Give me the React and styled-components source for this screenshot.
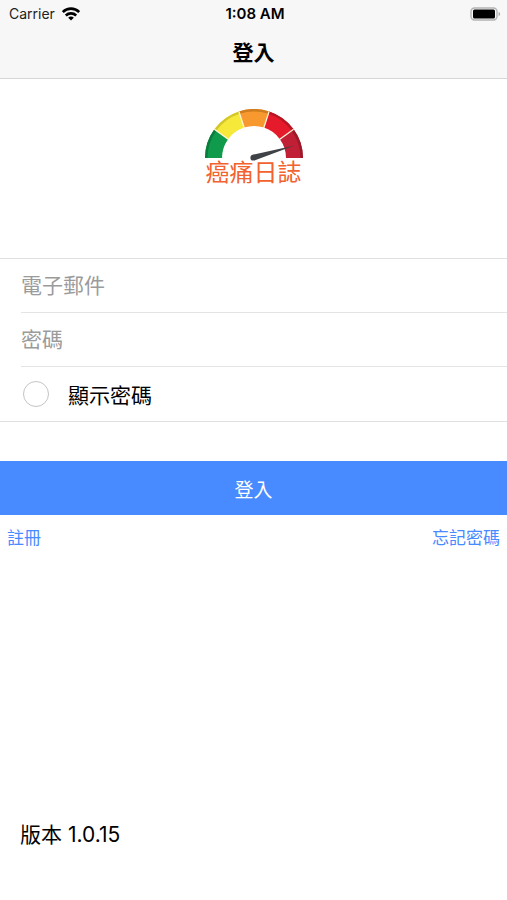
import { useState } from 'react';
import styled, { createGlobalStyle } from 'styled-components';

const segments = [
    { color: '#0f9a4c', edge: '#0a7d3c', from: 180, to: 144 },
    { color: '#f6e93a', edge: '#d3c62c', from: 144, to: 108 },
    { color: '#f7992f', edge: '#d07d1f', from: 108, to: 72 },
    { color: '#e51b2b', edge: '#b81622', from: 72, to: 36 },
    { color: '#c01f35', edge: '#9a1a2a', from: 36, to: 0 }
];

function point (angle, radius) {

    const rad = angle * Math.PI / 180;
    return `${(49 + radius * Math.cos(rad)).toFixed(2)} ${(49 - radius * Math.sin(rad)).toFixed(2)}`;

}

function band (from, to, outer, inner) {

    return `M${point(from, outer)} A${outer} ${outer} 0 0 1 ${point(to, outer)} L${point(to, inner)} A${inner} ${inner} 0 0 0 ${point(from, inner)} Z`;

}

function Gauge () {

    return (
        <svg width='98' height='52' viewBox='0 0 98 52' aria-hidden='true'>
            {segments.map(({ color, edge, from, to }) => (
                <g key={from}>
                    <path d={band(from, to, 49, 32)} fill={color} />
                    <path d={band(from, to, 49, 46.5)} fill={edge} />
                </g>
            ))}
            {[144, 108, 72, 36].map(angle => (
                <path key={angle} d={`M${point(angle, 31)} L${point(angle, 49)}`} stroke='#fff3d8' strokeWidth='1.3' />
            ))}
            <path d='M47.6 45.8 L89.5 36.5 L49.4 51.4 Z' fill='#3f4347' />
            <circle cx='48.3' cy='48.7' r='2.9' fill='#3f4347' />
        </svg>
    );

}

function Wifi () {

    return (
        <svg width='18' height='14' viewBox='0 0 18 14' aria-hidden='true'>
            <g fill='none' stroke='#000' strokeWidth='2.7'>
                <path d='M0.8 5 C5.4 0.6 12.6 0.6 17.2 5' />
                <path d='M3.8 8.5 C6.8 5.7 11.2 5.7 14.2 8.5' />
            </g>
            <path d='M9 13.5 L6.2 10.7 C7.8 9.2 10.2 9.2 11.8 10.7 Z' />
        </svg>
    );

}

function Battery () {

    return (
        <svg width='31' height='14' viewBox='0 0 31 14' aria-hidden='true'>
            <rect x='1' y='1' width='26' height='12' rx='3.5' fill='none' stroke='#b4b4b4' strokeWidth='1.4' />
            <rect x='3' y='2.5' width='22' height='9' rx='1.5' />
            <path d='M28.6 4.8 C30.6 5.6 30.6 8.4 28.6 9.2 Z' fill='#a8a8a8' />
        </svg>
    );

}

export default function App () {

    const [email, setEmail] = useState('');
    const [password, setPassword] = useState('');
    const [visible, setVisible] = useState(false);

    return (
        <>
            <GlobalStyle />
            <Page>
                <Header>
                    <StatusBar>
                        <Carrier>Carrier <Wifi /></Carrier>
                        <Clock>1:08 AM</Clock>
                        <BatterySlot><Battery /></BatterySlot>
                    </StatusBar>
                    <Title>登入</Title>
                </Header>
                <Logo>
                    <Gauge />
                    <LogoName>癌痛日誌</LogoName>
                </Logo>
                <form onSubmit={e => e.preventDefault()}>
                    <Fields>
                        <Row>
                            <Field
                                type='email'
                                aria-label='電子郵件'
                                placeholder='電子郵件'
                                value={email}
                                onChange={e => setEmail(e.target.value)}
                            />
                        </Row>
                        <Row>
                            <Field
                                type={visible ? 'text' : 'password'}
                                aria-label='密碼'
                                placeholder='密碼'
                                value={password}
                                onChange={e => setPassword(e.target.value)}
                            />
                        </Row>
                        <CheckRow>
                            <Check type='checkbox' checked={visible} onChange={() => setVisible(!visible)} />
                            顯示密碼
                        </CheckRow>
                    </Fields>
                    <Submit type='submit'>登入</Submit>
                </form>
                <Links>
                    <Link href='#register'>註冊</Link>
                    <Link href='#forgot'>忘記密碼</Link>
                </Links>
                <Version>版本 1.0.15</Version>
            </Page>
        </>
    );

}

const GlobalStyle = createGlobalStyle`

    * {
        box-sizing: border-box;
    }

    body {
        margin: 0;
        background: #FFFFFF;
        color: #000000;
        font-family: Inter, 'Noto Sans CJK TC', sans-serif;
    }

    input, button {
        font-family: inherit;
    }

`;

const Page = styled.div`

    min-height: 100vh;
    display: flex;
    flex-direction: column;

`;

const Header = styled.header`

    background: #F7F7F7;
    border-bottom: 1px solid #D6D6D6;

`;

const StatusBar = styled.div`

    height: 27px;
    padding: 0 6px 0 9px;
    display: grid;
    grid-template-columns: 1fr auto 1fr;
    align-items: center;
    font-size: 14px;

`;

const Carrier = styled.div`

    display: flex;
    align-items: center;
    gap: 7px;
    color: #222222;

`;

const Clock = styled.div`

    font-size: 15px;
    font-weight: 600;

`;

const BatterySlot = styled.div`

    display: flex;
    justify-content: flex-end;

`;

const Title = styled.h1`

    margin: 0;
    height: 51px;
    line-height: 51px;
    text-align: center;
    font-size: 21px;
    font-weight: 700;

`;

const Logo = styled.div`

    height: 179px;
    padding-top: 30px;
    display: flex;
    flex-direction: column;
    align-items: center;

`;

const LogoName = styled.div`

    line-height: 24px;
    font-size: 24px;
    color: #F2622E;

`;

const Fields = styled.div`

    padding-left: 21px;
    border-top: 1px solid #E0E0E0;
    border-bottom: 1px solid #E0E0E0;

`;

const Row = styled.div`

    height: 54px;
    border-bottom: 1px solid #E4E4E4;

`;

const Field = styled.input`

    width: 100%;
    height: 100%;
    padding: 0;
    border: 0;
    outline: 0;
    background: transparent;
    font-size: 21px;

    &::placeholder {
        color: #9B9B9B;
        opacity: 1;
    }

`;

const CheckRow = styled.label`

    height: 54px;
    padding-left: 2px;
    display: flex;
    align-items: center;
    gap: 19px;
    font-size: 21px;

`;

const Check = styled.input`

    appearance: none;
    width: 26px;
    height: 26px;
    margin: 0;
    border: 1px solid #C4C4C4;
    border-radius: 50%;

    &:checked {
        border-color: #488AFF;
        background: #488AFF;
    }

`;

const Submit = styled.button`

    width: 100%;
    height: 54px;
    margin-top: 39px;
    padding: 0;
    display: block;
    border: 0;
    background: #488AFF;
    color: #FFFFFF;
    font-size: 19px;

`;

const Links = styled.nav`

    padding: 11px 7px;
    display: flex;
    justify-content: space-between;

`;

const Link = styled.a`

    line-height: 24px;
    font-size: 17px;
    color: #488AFF;
    text-decoration: none;

`;

const Version = styled.footer`

    margin-top: auto;
    padding: 0 20px 50px;
    line-height: 30px;
    font-size: 21px;

`;
